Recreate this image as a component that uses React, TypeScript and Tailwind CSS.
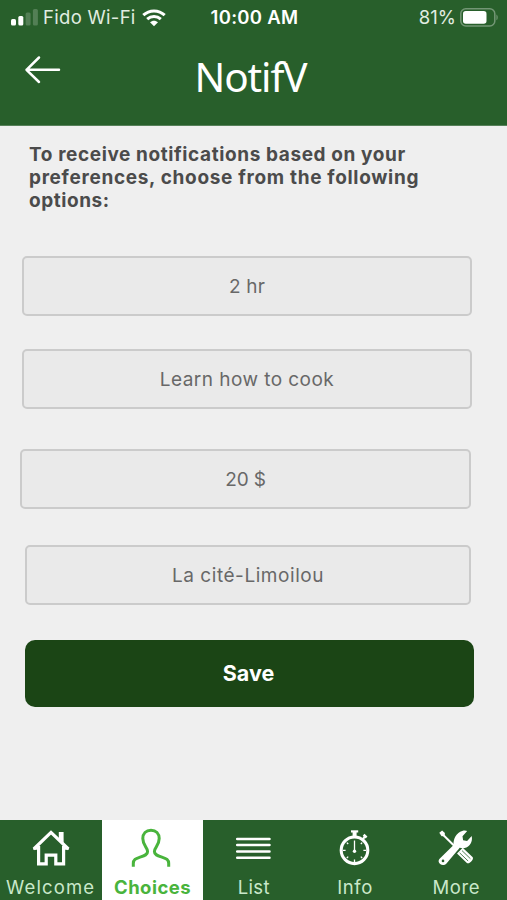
import React from 'react';

interface Option {
  label: string;
  box: string;
  text: string;
}

interface Tab {
  label: string;
  icon: React.ReactNode;
  text: string;
  active?: boolean;
}

const options: Option[] = [
  { label: '2 hr', box: 'ml-[22px] w-[450px]', text: 'tracking-[0.2px]' },
  { label: 'Learn how to cook', box: 'mt-[33px] ml-[22px] w-[450px]', text: 'tracking-[0.45px]' },
  { label: '20 $', box: 'mt-10 ml-5 w-[451px]', text: 'tracking-[-0.2px]' },
  { label: 'La cité-Limoilou', box: 'mt-9 ml-[25px] w-[446px]', text: 'tracking-[0.55px]' },
];

const HomeIcon = () => (
  <svg width="40" height="44" viewBox="0 0 40 44" fill="none" stroke="currentColor" strokeWidth="3.2">
    <path d="M7.6 20v17.800h7.600V29.200h9.600v8.600h7.800V20" />
    <path d="M2.2 22.900H7.400M32.600 22.900h5.200" strokeWidth="1.8" />
    <path d="M2.8 23L20 6.400 37.400 23" />
    <path d="M27.800 6h4.800v11l-4.800-4.600z" fill="currentColor" stroke="none" />
  </svg>
);

const PersonIcon = () => (
  <svg width="40" height="44" viewBox="0 0 40 44" fill="none" stroke="currentColor" strokeWidth="3" className="overflow-visible">
    <path d="M.3 40.800V37.600C.3 33.700 2.700 32.600 6.500 31.300C11 29.800 14.600 29 14.600 25.500C14.600 21.500 9.800 19.500 9.800 12.600C9.800 7.400 13 4.200 18 4.200C23 4.200 26.200 7.400 26.200 12.600C26.200 19.500 21.400 21.500 21.400 25.500C21.400 29 25 29.800 29.500 31.300C33.300 32.600 35.700 33.700 35.700 37.600V40.800" />
  </svg>
);

const ListIcon = () => (
  <svg width="40" height="44" viewBox="0 0 40 44" fill="none" stroke="currentColor" strokeWidth="2.500" strokeLinecap="round">
    <path d="M3.200 12.900H35.500M3.200 19.100H35.500M3.200 25.500H35.500M3.200 31.700H35.500" />
  </svg>
);

const StopwatchIcon = () => (
  <svg width="40" height="44" viewBox="0 0 40 44" fill="none" stroke="currentColor">
    <circle cx="19.5" cy="24.3" r="13.3" strokeWidth="3.1" />
    <path d="M16 5.400h7.200" strokeWidth="2.2" />
    <path d="M19.600 6v5" strokeWidth="4" />
    <path d="M27.500 13.500l2.500-3" strokeWidth="2" />
    <path d="M28.600 8.800l3 2.600" strokeWidth="2.6" />
    <path d="M19.500 14.500v10" strokeWidth="1.3" />
    <circle cx="19.5" cy="25.2" r="1.7" fill="currentColor" stroke="none" />
    <path d="M8 24.300h2.600M28.400 24.300H31M19.500 36v-2.600M11.800 16.600l1.400 1.400M27.200 16.600L25.800 18M11.800 32l1.400-1.400M27.200 32l-1.400-1.400" strokeWidth="1.3" />
  </svg>
);

const ToolsIcon = () => (
  <svg width="40" height="44" viewBox="0 0 40 44" fill="none" stroke="currentColor">
    <path d="M6 7.800L22 23.500" strokeWidth="2" />
    <path d="M3.300 6.700l2.800-2.100 2.800 2.500-.3 2.800-3 .3z" fill="currentColor" stroke="none" />
    <path d="M21 27.400l5.700-5.700 9.800 9.200c2.200 2.200-3.600 8.200-5.900 5.800z" fill="currentColor" stroke="none" />
    <path d="M26 24.600l8.400 8.100M23.700 26.900l8.400 8.100" stroke="#285f2b" strokeWidth=".8" />
    <path
      d="M3.600 32.700L17.600 19C17 12.800 20.600 6.800 26.200 5c2-.6 3.700-.5 5 .1l-4.700 5.100.6 4.100 4 .6 4.600-4.900c1.200 5.800-1.900 11-7.100 12-1.900.4-3.500.2-4.900-.3L10.500 37.400c-1.900 2.100-4.500 2.200-6.400.6-1.800-1.500-2-3.700-.5-5.300z"
      fill="currentColor"
      stroke="none"
    />
    <circle cx="7" cy="34.9" r="1.300" fill="#285f2b" stroke="none" />
  </svg>
);

const tabs: Tab[] = [
  { label: 'Welcome', icon: <HomeIcon />, text: 'tracking-[1.15px]' },
  { label: 'Choices', icon: <PersonIcon />, text: 'tracking-[0.45px]', active: true },
  { label: 'List', icon: <ListIcon />, text: 'tracking-[0.3px]' },
  { label: 'Info', icon: <StopwatchIcon />, text: 'tracking-[0.6px]' },
  { label: 'More', icon: <ToolsIcon />, text: 'tracking-[0.6px]' },
];

const StatusBar = () => (
  <div className="grid h-[35px] grid-cols-3 items-center pl-[11px] pr-[9px] text-[18.5px] leading-none text-[#e1ede1]">
    <div className="flex items-center whitespace-nowrap">
      <svg width="28" height="18" viewBox="0 0 28 18" fill="white">
        <rect x="0" y="10" width="5" height="6.5" rx="1.5" />
        <rect x="7.3" y="7" width="5" height="9.5" rx="1.5" />
        <rect x="14.6" y="3.5" width="5" height="13" rx="1.5" opacity=".2" />
        <rect x="21.9" y="0" width="5" height="16.5" rx="1.5" opacity=".2" />
      </svg>
      <span className="ml-1 tracking-[0.3px]">Fido Wi-Fi</span>
      <svg className="ml-[6px]" width="24" height="18" viewBox="0 0 24 18" fill="none" stroke="white" strokeWidth="3">
        <path d="M1.300 6.200c6-5.700 15.400-5.700 21.400 0M5.200 10.200c3.900-3.600 9.700-3.600 13.600 0" />
        <path d="M8 13.200c2.300-2.100 5.700-2.100 8 0l-4 4z" fill="white" stroke="none" />
      </svg>
    </div>
    <div className="whitespace-nowrap text-center font-semibold tracking-[0.3px] text-white">10:00 AM</div>
    <div className="flex items-center justify-end">
      <span>81%</span>
      <svg className="ml-1" width="38" height="19" viewBox="0 0 38 19" fill="none">
        <rect x=".8" y=".8" width="34" height="17.2" rx="5" stroke="white" strokeOpacity=".35" strokeWidth="1.5" />
        <rect x="3" y="3" width="23.5" height="12.8" rx="2.8" fill="white" />
        <path d="M36.500 6.500c1.500.8 1.500 5 0 5.800z" fill="white" opacity=".4" />
      </svg>
    </div>
  </div>
);

const Header = () => (
  <header className="h-[126px] border-b border-[#568059] bg-[#285f2b]">
    <StatusBar />
    <div className="grid grid-cols-[80px_1fr_86px]">
      <button aria-label="Back" className="ml-6 mt-[19px] h-8 w-10 text-white">
        <svg width="38" height="32" viewBox="0 0 38 32" fill="none" stroke="currentColor" strokeWidth="2.5" strokeLinecap="round" strokeLinejoin="round">
          <path d="M15 3.500L2.500 15.800 15 28M2.500 15.800h32.500" />
        </svg>
      </button>
      <h1 className="mt-3.5 text-center font-['Noto_Sans',sans-serif] text-[40.5px] leading-[56px] tracking-[-1.1px] text-white">NotifV</h1>
    </div>
  </header>
);

const TabBar = () => (
  <nav className="flex h-[80.5px] bg-[#285f2b]">
    {tabs.map((tab) => (
      <button
        key={tab.label}
        className={`flex flex-1 basis-0 flex-col items-center pt-[6.5px] ${tab.active ? 'ml-[0.6px] bg-white font-bold text-[#49b43c]' : 'text-white'}`}
      >
        {tab.icon}
        <span className={`mt-[5px] whitespace-nowrap text-[18.5px] leading-[25px] ${tab.text} ${tab.active ? '' : 'text-[#cae8ca]'}`}>{tab.label}</span>
      </button>
    ))}
  </nav>
);

const App: React.FC = () => {
  return (
    <div className="flex h-[900px] w-[507px] flex-col overflow-hidden bg-[#efefef] font-['Inter',sans-serif]">
      <Header />
      <main className="flex-1">
        <p className="ml-[29px] mt-4 h-[114px] whitespace-nowrap pt-px text-[19px] font-bold leading-[23px] text-[#4b4b4b]">
          <span className="block tracking-[0.6px]">To receive notifications based on your</span>
          <span className="block tracking-[0.68px]">preferences, choose from the following</span>
          <span className="block tracking-[0.55px]">options:</span>
        </p>
        {options.map((option) => (
          <button
            key={option.label}
            className={`flex h-[60px] items-center justify-center rounded-[5px] border-2 border-[#cbcbcb] bg-[#eaeaea] pt-px text-[19px] leading-7 text-[#686868] ${option.box}`}
          >
            <span className={option.text}>{option.label}</span>
          </button>
        ))}
        <button className="ml-[25px] mt-[35px] h-[67px] w-[449px] rounded-[10px] bg-[#1b4515] pr-0.5 text-[21.5px] font-bold text-white">Save</button>
      </main>
      <TabBar />
    </div>
  );
};

export default App;
